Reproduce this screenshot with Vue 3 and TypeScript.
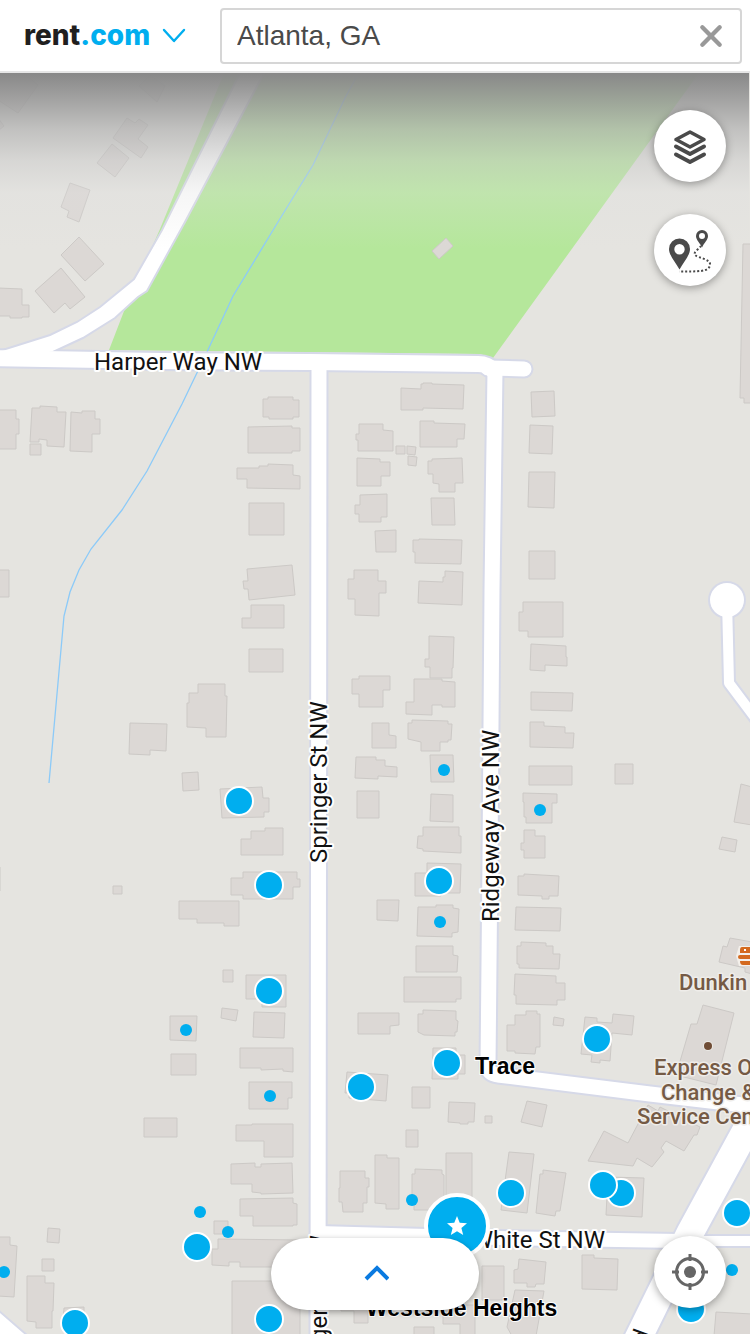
<script setup lang="ts">
import { ref } from 'vue'

interface Pin {
  x: number
  y: number
  kind: 'large' | 'small' | 'star'
}

const MAP_WIDTH = 750
const MAP_TOP = 73
const MAP_HEIGHT = 1261

const query = ref('Atlanta, GA')

const buildings: string[] = [
  '127,118 135,123 139,119 148,125 138,139 148,147 141,158 113,138',
  '112,144 129,158 115,177 97,163',
  '70,183 90,190 79,222 67,217 69,211 61,207',
  '-2,100 18,113 38,85 20,70 -2,70',
  '139,86 157,102 165,86 150,75',
  '-2,118 4,126 -2,131',
  '432,251 446,238 453,246 439,259',
  '743,244 752,244 752,403 744,403 744,398 740,398',
  '61,255 79,237 104,264 85,281',
  '35,291 61,268 85,297 70,309 65,303 54,313',
  '-2,288 22,289 22,305 29,305 29,317 22,317 22,318 10,318 10,316 -2,316',
  '-2,410 16,410 16,419 19,419 19,434 16,434 16,449 -2,449',
  '32,408 40,408 40,406 57,407 57,412 66,412 64,447 47,446 47,440 39,439 39,442 30,442',
  '30,444 41,444 41,455 30,455',
  '71,412 82,413 82,411 95,411 95,419 100,419 100,434 92,434 92,452 70,451',
  '263,399 268,399 268,397 293,397 293,400 299,400 299,417 293,417 293,419 269,419 269,417 263,417',
  '248,427 292,426 292,428 300,428 300,451 292,451 292,453 248,453',
  '237,468 259,468 259,466 268,466 268,464 293,465 293,475 300,476 300,489 247,488 247,479 237,479',
  '249,503 284,503 284,535 249,535',
  '247,569 292,565 295,595 249,600 248,589 244,589 243,581 248,581',
  '251,605 284,605 284,628 242,628 242,618 251,618',
  '249,649 283,649 283,672 249,672',
  '-2,570 9,570 9,597 -2,597',
  '198,684 225,684 225,696 227,696 226,737 206,737 206,728 187,727 187,703 189,703 189,693 198,693',
  '130,723 167,724 166,751 150,750 150,755 129,754',
  '182,773 198,772 199,790 183,791',
  '220,789 262,787 263,798 269,798 269,812 264,812 264,817 222,818',
  '241,839 251,839 251,831 265,831 265,828 283,828 283,855 241,855',
  '231,878 243,878 243,872 297,872 297,879 300,879 300,887 293,887 293,899 243,899 243,895 231,895',
  '113,886 122,886 122,894 113,894',
  '-2,867 0,867 0,891 -2,891',
  '179,901 239,901 239,926 224,926 224,923 197,923 197,919 179,919',
  '223,970 233,970 233,982 223,982',
  '246,975 286,975 286,1007 262,1007 262,999 246,999',
  '222,1008 238,1010 236,1021 221,1018',
  '254,1012 285,1013 284,1038 253,1037',
  '170,1016 197,1016 196,1041 170,1040',
  '171,1054 196,1054 196,1075 171,1075',
  '240,1048 293,1048 293,1072 283,1071 283,1069 261,1070 261,1068 240,1068',
  '249,1082 292,1082 292,1098 288,1098 288,1109 249,1109',
  '144,1118 177,1118 177,1137 144,1137',
  '236,1125 252,1125 252,1124 293,1124 293,1157 264,1157 264,1141 236,1141',
  '231,1164 255,1163 255,1167 261,1167 261,1164 292,1163 293,1193 261,1194 261,1193 252,1192 252,1184 231,1184',
  '240,1199 293,1198 293,1203 297,1204 297,1225 293,1225 293,1226 253,1226 253,1216 240,1216',
  '214,1221 228,1221 228,1234 214,1234',
  '218,1239 300,1240 300,1267 240,1267 240,1262 229,1262 229,1266 212,1265 212,1249 218,1249',
  '232,1281 300,1281 300,1336 232,1336',
  '48,1228 60,1229 59,1243 47,1242',
  '42,1259 54,1259 54,1271 42,1271',
  '-2,1237 10,1237 10,1245 17,1246 14,1297 -2,1296',
  '27,1276 45,1276 45,1283 54,1283 53,1311 52,1311 52,1328 36,1328 36,1322 27,1321',
  '64,1308 84,1307 84,1320 63,1320',
  '340,1171 365,1171 365,1178 369,1178 369,1187 367,1187 367,1203 363,1203 363,1212 343,1212 342,1202 339,1202 339,1188 340,1188',
  '347,1072 388,1075 386,1101 349,1098 349,1093 345,1093',
  '341,1300 368,1300 368,1323 354,1323 354,1311 341,1311',
  '401,388 421,389 421,384 423,384 423,383 432,383 432,384 464,385 463,409 423,408 423,410 401,410',
  '420,421 434,421 434,423 465,424 464,439 457,439 457,447 420,447',
  '359,424 383,424 383,430 393,431 393,451 358,451 358,440 356,440 356,434 359,434',
  '396,446 405,446 405,454 396,454',
  '407,446 416,447 415,455 407,454',
  '408,456 417,457 416,466 408,465',
  '357,458 380,459 380,462 390,462 390,476 381,476 381,486 357,486',
  '428,461 432,461 432,459 462,458 463,483 455,483 455,492 439,492 439,484 433,483 433,474 428,474',
  '431,498 454,498 455,525 432,525',
  '360,495 387,494 387,517 381,517 381,522 359,522 359,514 355,514 355,505 360,505',
  '375,531 396,530 396,552 376,552',
  '413,540 419,540 419,539 462,540 461,564 415,563 415,552 413,552',
  '419,581 443,582 443,577 445,577 445,571 463,572 462,605 418,603',
  '354,570 378,570 378,581 386,581 386,593 379,593 379,616 355,615 355,599 348,599 348,579 354,579',
  '531,392 554,391 555,416 532,417',
  '530,425 553,426 552,454 529,453',
  '529,472 555,472 554,508 528,507',
  '529,551 555,551 555,579 529,579',
  '523,602 563,602 563,637 528,637 528,631 519,631 519,612 523,612',
  '531,644 566,646 566,657 567,657 567,666 545,665 545,671 530,670',
  '531,692 573,693 572,711 531,710',
  '530,722 544,722 544,726 565,727 565,733 574,733 573,748 530,747',
  '529,766 572,766 572,785 529,785',
  '615,764 633,764 633,784 615,784',
  '523,793 557,794 557,803 552,803 552,823 526,823 526,817 524,817 524,802 523,802',
  '524,830 535,830 535,836 545,836 545,858 524,858 524,850 521,850 521,843 524,843',
  '741,784 752,787 752,825 734,822',
  '722,837 737,840 735,852 719,849',
  '429,636 454,637 453,668 452,668 452,678 430,678 430,667 425,667 425,659 429,659',
  '414,679 442,679 442,681 455,682 455,707 442,707 442,705 432,705 432,715 406,714 406,702 414,702',
  '359,676 390,676 390,690 383,690 383,707 359,707 359,694 352,694 352,679 359,679',
  '408,723 412,723 412,720 448,721 448,724 452,724 451,740 448,740 448,742 440,742 440,751 421,751 421,742 408,739',
  '372,723 389,723 389,735 396,736 396,748 372,748',
  '430,755 453,755 454,782 431,782',
  '356,757 376,757 376,760 385,760 385,766 397,767 397,777 378,776 378,779 355,778',
  '357,791 379,791 379,818 357,818',
  '431,794 453,795 453,822 430,821',
  '423,827 459,827 459,836 461,836 461,853 423,851 423,849 417,848 418,836 423,836',
  '427,863 461,864 460,893 441,893 441,896 415,896 415,873 427,873',
  '418,907 436,907 436,905 453,905 453,908 459,909 458,932 452,933 452,937 417,936',
  '377,900 399,900 398,921 377,920',
  '416,946 453,946 453,955 458,956 457,972 416,972',
  '404,977 461,977 461,999 456,999 456,1002 404,1002',
  '423,1010 456,1011 456,1020 458,1021 457,1032 455,1032 455,1036 424,1035 418,1032 418,1014 423,1014',
  '358,1013 399,1013 399,1025 390,1026 390,1034 358,1034',
  '433,1048 456,1048 456,1055 465,1055 465,1074 458,1074 458,1079 432,1079',
  '518,876 524,876 524,874 559,876 558,896 549,896 549,899 542,899 542,896 518,895',
  '516,907 561,908 560,931 515,930',
  '517,946 521,946 521,942 546,943 546,946 553,946 553,954 560,954 559,969 519,968 519,964 517,964',
  '515,974 556,976 556,983 565,983 565,1000 557,1000 557,1005 516,1004 516,995 514,995',
  '507,1025 515,1025 515,1015 526,1015 526,1011 537,1011 537,1014 540,1014 540,1047 536,1047 535,1054 515,1053 515,1051 507,1051',
  '554,1017 564,1019 563,1026 553,1025',
  '585,1017 597,1018 597,1022 612,1023 613,1014 634,1016 632,1035 612,1033 610,1061 600,1060 600,1063 591,1062 592,1055 581,1054',
  '730,938 752,942 752,974 745,972 745,968 719,962 723,946 727,947',
  '703,1005 734,1013 716,1085 676,1075 691,1024 697,1024',
  '412,1087 430,1087 430,1108 412,1108',
  '449,1102 475,1103 474,1122 468,1122 468,1124 460,1124 460,1123 448,1122',
  '485,1116 492,1116 492,1123 485,1123',
  '527,1101 547,1105 542,1127 521,1122',
  '406,1130 418,1130 418,1147 406,1147',
  '375,1155 387,1155 387,1158 399,1158 399,1209 386,1209 386,1204 375,1203',
  '415,1169 442,1170 442,1174 444,1175 444,1210 414,1210 414,1195 412,1195 412,1174 415,1174',
  '446,1153 472,1153 472,1200 446,1200',
  '509,1152 534,1154 527,1213 501,1210',
  '543,1170 566,1173 560,1211 556,1211 555,1216 536,1213 540,1174 543,1174',
  '588,1161 604,1131 628,1143 648,1105 658,1111 660,1107 700,1127 697,1135 694,1135 684,1151 666,1141 661,1148 664,1152 652,1167 637,1158 633,1166',
  '608,1177 644,1178 642,1217 606,1215',
  '582,1255 594,1255 594,1258 618,1259 617,1290 582,1289',
  '519,1259 546,1262 544,1284 536,1284 535,1287 527,1287 527,1283 514,1283 514,1270 518,1269',
  '482,1266 504,1266 504,1300 482,1300',
  '443,1305 475,1305 475,1336 460,1336 460,1324 443,1324',
  '515,1290 544,1291 536,1336 512,1336 507,1327',
  '414,1327 434,1327 434,1336 414,1336',
  '716,1312 752,1314 752,1336 714,1336',
]

const streets = [
  { d: 'M-10 358 L160 361 L310 362 L478 364 Q488 364 494 371', w: 16 },
  { d: 'M488 368 L524 369', w: 15 },
  { d: 'M319 364 L318 1345', w: 15 },
  { d: 'M495 370 L492 590 L490 860 L488 1066 Q488 1074 498 1075 L650 1094 L760 1107', w: 15 },
  { d: 'M318 1233 L500 1238 L680 1241', w: 14 },
  { d: 'M680 1241 L760 1241', w: 10 },
  { d: 'M727 600 L729 683 L756 719', w: 10 },
  { d: 'M626 1363 L690 1233 L770 1086', w: 27 },
]

const pins: Pin[] = [
  { x: 444, y: 770, kind: 'small' },
  { x: 540, y: 810, kind: 'small' },
  { x: 440, y: 922, kind: 'small' },
  { x: 186, y: 1030, kind: 'small' },
  { x: 270, y: 1096, kind: 'small' },
  { x: 412, y: 1200, kind: 'small' },
  { x: 200, y: 1212, kind: 'small' },
  { x: 228, y: 1232, kind: 'small' },
  { x: 4, y: 1272, kind: 'small' },
  { x: 732, y: 1270, kind: 'small' },
  { x: 239, y: 801, kind: 'large' },
  { x: 269, y: 885, kind: 'large' },
  { x: 269, y: 991, kind: 'large' },
  { x: 439, y: 881, kind: 'large' },
  { x: 597, y: 1039, kind: 'large' },
  { x: 447, y: 1063, kind: 'large' },
  { x: 361, y: 1087, kind: 'large' },
  { x: 511, y: 1193, kind: 'large' },
  { x: 621, y: 1193, kind: 'large' },
  { x: 603, y: 1185, kind: 'large' },
  { x: 737, y: 1213, kind: 'large' },
  { x: 197, y: 1247, kind: 'large' },
  { x: 75, y: 1323, kind: 'large' },
  { x: 269, y: 1319, kind: 'large' },
  { x: 691, y: 1309, kind: 'large' },
  { x: 457, y: 1226, kind: 'star' },
]

function place(pin: Pin) {
  return {
    left: `${(pin.x / MAP_WIDTH) * 100}%`,
    top: `${((pin.y - MAP_TOP) / MAP_HEIGHT) * 100}%`,
  }
}
</script>

<template>
  <div class="page">
    <header class="bar">
      <button class="brand" type="button" aria-label="rent.com menu">
        <span class="word"><span>rent</span><span class="tld">.com</span></span>
        <svg class="caret" viewBox="0 0 24 18" aria-hidden="true">
          <path d="M2 3 L12 14 L22 3" fill="none" stroke="#00aeef" stroke-width="2.4" stroke-linecap="round" stroke-linejoin="round" />
        </svg>
      </button>
      <form class="search" @submit.prevent>
        <input v-model="query" class="field" type="text" aria-label="Location" />
        <button class="clear" type="button" aria-label="Clear location" @click="query = ''">
          <svg viewBox="0 0 24 24" aria-hidden="true">
            <path d="M4 4 L20 20 M20 4 L4 20" stroke="#999" stroke-width="4" stroke-linecap="round" />
          </svg>
        </button>
      </form>
    </header>

    <main class="map">
      <svg class="canvas" viewBox="0 73 750 1261" role="img" aria-label="Street map of Westside Heights, Atlanta">
        <rect x="0" y="73" width="750" height="1261" fill="#e5e4e0" />
        <polygon points="109,350 126,306 160,229 224,73 699,73 493,358 480,354" fill="#b5e79b" />
        <g fill="#dcd8d5" stroke="#ccc9c6" stroke-width="1">
          <polygon v-for="b in buildings" :key="b" :points="b" />
        </g>
        <polyline
          points="357,76 345,98 313,165 278,222 233,296 207,352 182,404 147,471 122,510 91,549 79,570 70,592 64,616 49,783"
          fill="none" stroke="#8ccaf8" stroke-width="1.3"
        />

        <g fill="none" stroke="#d6d9e8" stroke-linecap="round" stroke-linejoin="round">
          <path v-for="s in streets" :key="s.d" :d="s.d" :stroke-width="s.w + 4" />
        </g>
        <circle cx="727" cy="600" r="19" fill="#d6d9e8" />
        <path
          d="M240 73 L162 230 L134 279 L100 307 L77 322 L50 335 L12 347 L-4 352 L-4 362 L53 352 L83 338 L115 318 L138 297 L147 291 L185 222 L264 73 Z"
          fill="#fff" stroke="#d6d9e8" stroke-width="2"
        />
        <path d="M-2 1310 L28 1336 L-2 1336 Z" fill="#fff" stroke="#d6d9e8" stroke-width="2" />
        <g fill="none" stroke="#fff" stroke-linecap="round" stroke-linejoin="round">
          <path v-for="s in streets" :key="s.d" :d="s.d" :stroke-width="s.w" />
        </g>
        <circle cx="727" cy="600" r="17" fill="#fff" />

        <g class="street">
          <text x="94" y="370">Harper Way NW</text>
          <text transform="translate(327 863) rotate(-90)">Springer St NW</text>
          <text transform="translate(327 1397) rotate(-90)">Springer St NW</text>
          <text transform="translate(499 922) rotate(-90)">Ridgeway Ave NW</text>
          <text x="605" y="1248" text-anchor="end">White St NW</text>
          <text transform="translate(651 1333) rotate(-70)" text-anchor="end">Blvd</text>
        </g>

        <g class="poi">
          <text x="679" y="990">Dunkin</text>
          <text x="654" y="1075">Express Oil</text>
          <text x="661" y="1100">Change &amp;</text>
          <text x="637" y="1124">Service Center</text>
        </g>
        <circle cx="708" cy="1046" r="5" fill="#eceae6" />
        <circle cx="708" cy="1046" r="4" fill="#6f4c35" />
        <g>
          <path d="M739 946 h20 v20 h-20 l-3 -10 Z" fill="#f3efea" />
          <path d="M742 947 h12 v6 h-14 v-3 q0 -3 2 -3 Z" fill="#d4691e" />
          <rect x="738" y="955" width="16" height="4" rx="2" fill="#d4691e" />
          <path d="M740 961 h14 v4 h-11 q-3 0 -3 -4 Z" fill="#d4691e" />
          <rect x="744" y="949" width="2" height="2" fill="#fff" />
        </g>

        <g class="place">
          <text x="475" y="1074">Trace</text>
          <text x="366" y="1316">Westside Heights</text>
        </g>
      </svg>

      <button
        v-for="(pin, i) in pins"
        :key="i"
        type="button"
        :class="['pin', pin.kind]"
        :style="place(pin)"
        :aria-label="pin.kind === 'star' ? 'Featured listing' : 'Listing'"
      >
        <svg v-if="pin.kind === 'star'" viewBox="0 0 20 20" aria-hidden="true">
          <path d="M10 0 L12.7 6.8 L20 7.3 L14.4 11.9 L16.2 19 L10 15.2 L3.8 19 L5.6 11.9 L0 7.3 L7.3 6.8 Z" fill="#fff" />
        </svg>
      </button>

      <div class="shade"></div>

      <div class="tools">
        <button class="round" type="button" aria-label="Map layers">
          <svg viewBox="0 0 48 48" aria-hidden="true">
            <g fill="none" stroke="#4a4a4a" stroke-width="4" stroke-linecap="round" stroke-linejoin="round">
              <path d="M24 10 L38 17.500 L24 25 L10 17.500 Z" stroke-width="3.6" />
              <path d="M10 24.500 L24 32 L38 24.500" />
              <path d="M10 32.500 L24 40 L38 32.500" />
            </g>
          </svg>
        </button>
        <button class="round" type="button" aria-label="Commute time">
          <svg viewBox="0 0 48 48" aria-hidden="true">
            <path fill="#4a4a4a" fill-rule="evenodd" d="M13.500 12.500 a10.500 10.500 0 0 1 10.500 10.500 c0 6.500 -6.500 13 -10.500 20.500 c-4 -7.500 -10.500 -14 -10.500 -20.500 a10.500 10.500 0 0 1 10.500 -10.500 Z M13.500 18 a5.200 5.200 0 1 0 0 10.400 a5.200 5.200 0 0 0 0 -10.400 Z" />
            <path fill="#4a4a4a" fill-rule="evenodd" d="M36 4 a6 6 0 0 1 6 6 c0 4 -4 7 -6 11.500 c-2 -4.500 -6 -7.500 -6 -11.500 a6 6 0 0 1 6 -6 Z M36 7 a3 3 0 1 0 0 6 a3 3 0 0 0 0 -6 Z" />
            <path d="M35 20 C33 23 27 26 29 29 C32 32 45 33 44 39 C43 46 32 45.500 13 45.500" fill="none" stroke="#4a4a4a" stroke-width="2" stroke-dasharray="2 2" />
          </svg>
        </button>
      </div>

      <button class="drawer" type="button" aria-label="Show listings">
        <svg viewBox="0 0 28 20" aria-hidden="true">
          <path d="M5 15 L16 4 L27 15" fill="none" stroke="#0a7ae0" stroke-width="4" />
        </svg>
      </button>

      <button class="round locate" type="button" aria-label="Use my location">
        <svg viewBox="0 0 48 48" aria-hidden="true">
          <g fill="none" stroke="#666" stroke-width="3">
            <circle cx="24" cy="24" r="13.500" />
            <path d="M24 6 V13 M24 35 V42 M6 24 H13 M35 24 H42" />
          </g>
          <circle cx="24" cy="24" r="6" fill="#666" />
        </svg>
      </button>
    </main>
  </div>
</template>

<style>
body {
  margin: 0;
  background: #e5e4e0;
}
</style>

<style scoped>
.page {
  font-family: "Liberation Sans", Arial, sans-serif;
  color: #4a4a4a;
}

button {
  padding: 0;
  border: 0;
  background: none;
  font: inherit;
  color: inherit;
  cursor: pointer;
}

.bar {
  display: flex;
  align-items: center;
  padding: 8px 8px 7px 24px;
  background: #fff;
  border-bottom: 2px solid #e6e6e6;
}

.brand {
  display: flex;
  flex: 0 0 196px;
  align-items: center;
  gap: 12px;
}

.word {
  padding-bottom: 2px;
  font-family: Inter, "Open Sans", sans-serif;
  font-size: 28px;
  font-weight: 800;
  line-height: 32px;
  color: #1f1f1f;
}

.tld {
  color: #00aeef;
}

.caret {
  width: 24px;
  height: 18px;
}

.search {
  position: relative;
  display: flex;
  flex: 1;
  min-width: 0;
}

.field {
  box-sizing: border-box;
  width: 100%;
  height: 56px;
  padding: 0 64px 0 15px;
  border: 2px solid #d6d6d6;
  border-radius: 4px;
  background: #fff;
  font: 28px/32px "Liberation Sans", Arial, sans-serif;
  color: #4a4a4a;
  outline: 0;
}

.clear {
  position: absolute;
  top: 15px;
  right: 18px;
  width: 26px;
  height: 26px;
}

.clear svg {
  display: block;
}

.map {
  position: relative;
  width: 100%;
  aspect-ratio: 750 / 1261;
  overflow: hidden;
}

.canvas {
  display: block;
  width: 100%;
  height: 100%;
}

.street,
.poi,
.place {
  paint-order: stroke;
  stroke: #fff;
  stroke-width: 4px;
  stroke-linejoin: round;
}

.street {
  font-family: Roboto, sans-serif;
  font-size: 24px;
  fill: #111;
}

.poi {
  font-family: Roboto, sans-serif;
  font-size: 22px;
  font-weight: 500;
  fill: #755a45;
  stroke: #efedea;
  stroke-width: 3px;
}

.place {
  font-size: 23px;
  font-weight: 700;
  fill: #000;
  stroke-width: 2px;
}

.shade {
  position: absolute;
  inset: 0 1px auto 0;
  height: 176px;
  background: linear-gradient(
    rgba(136, 136, 136, 1) 0,
    rgba(152, 152, 152, 0.84) 28px,
    rgba(176, 176, 176, 0.68) 56px,
    rgba(200, 200, 200, 0.48) 88px,
    rgba(222, 222, 222, 0.28) 120px,
    rgba(229, 229, 229, 0) 100%
  );
  pointer-events: none;
}

.pin {
  position: absolute;
  box-sizing: border-box;
  transform: translate(-50%, -50%);
  border-radius: 50%;
  background: #00aeef;
}

.small {
  width: 12px;
  height: 12px;
}

.large {
  width: 30px;
  height: 30px;
  border: 2px solid #fff;
}

.star {
  display: flex;
  align-items: center;
  justify-content: center;
  width: 66px;
  height: 66px;
  border: 4px solid #fff;
}

.star svg {
  width: 20px;
  height: 20px;
}

.tools {
  position: absolute;
  top: 37px;
  right: 24px;
  display: grid;
  gap: 32px;
}

.round {
  display: flex;
  align-items: center;
  justify-content: center;
  width: 72px;
  height: 72px;
  border-radius: 50%;
  background: #fff;
  box-shadow: 0 2px 8px rgba(0, 0, 0, 0.35);
}

.round svg {
  width: 48px;
  height: 48px;
}

.locate {
  position: absolute;
  right: 24px;
  bottom: 26px;
}

.drawer {
  position: absolute;
  bottom: 24px;
  left: 50%;
  display: flex;
  align-items: center;
  justify-content: center;
  width: 208px;
  height: 72px;
  transform: translateX(-50%);
  border-radius: 36px;
  background: #fff;
  box-shadow: 0 2px 6px rgba(0, 0, 0, 0.35);
}

.drawer svg {
  width: 28px;
  height: 20px;
}
</style>
